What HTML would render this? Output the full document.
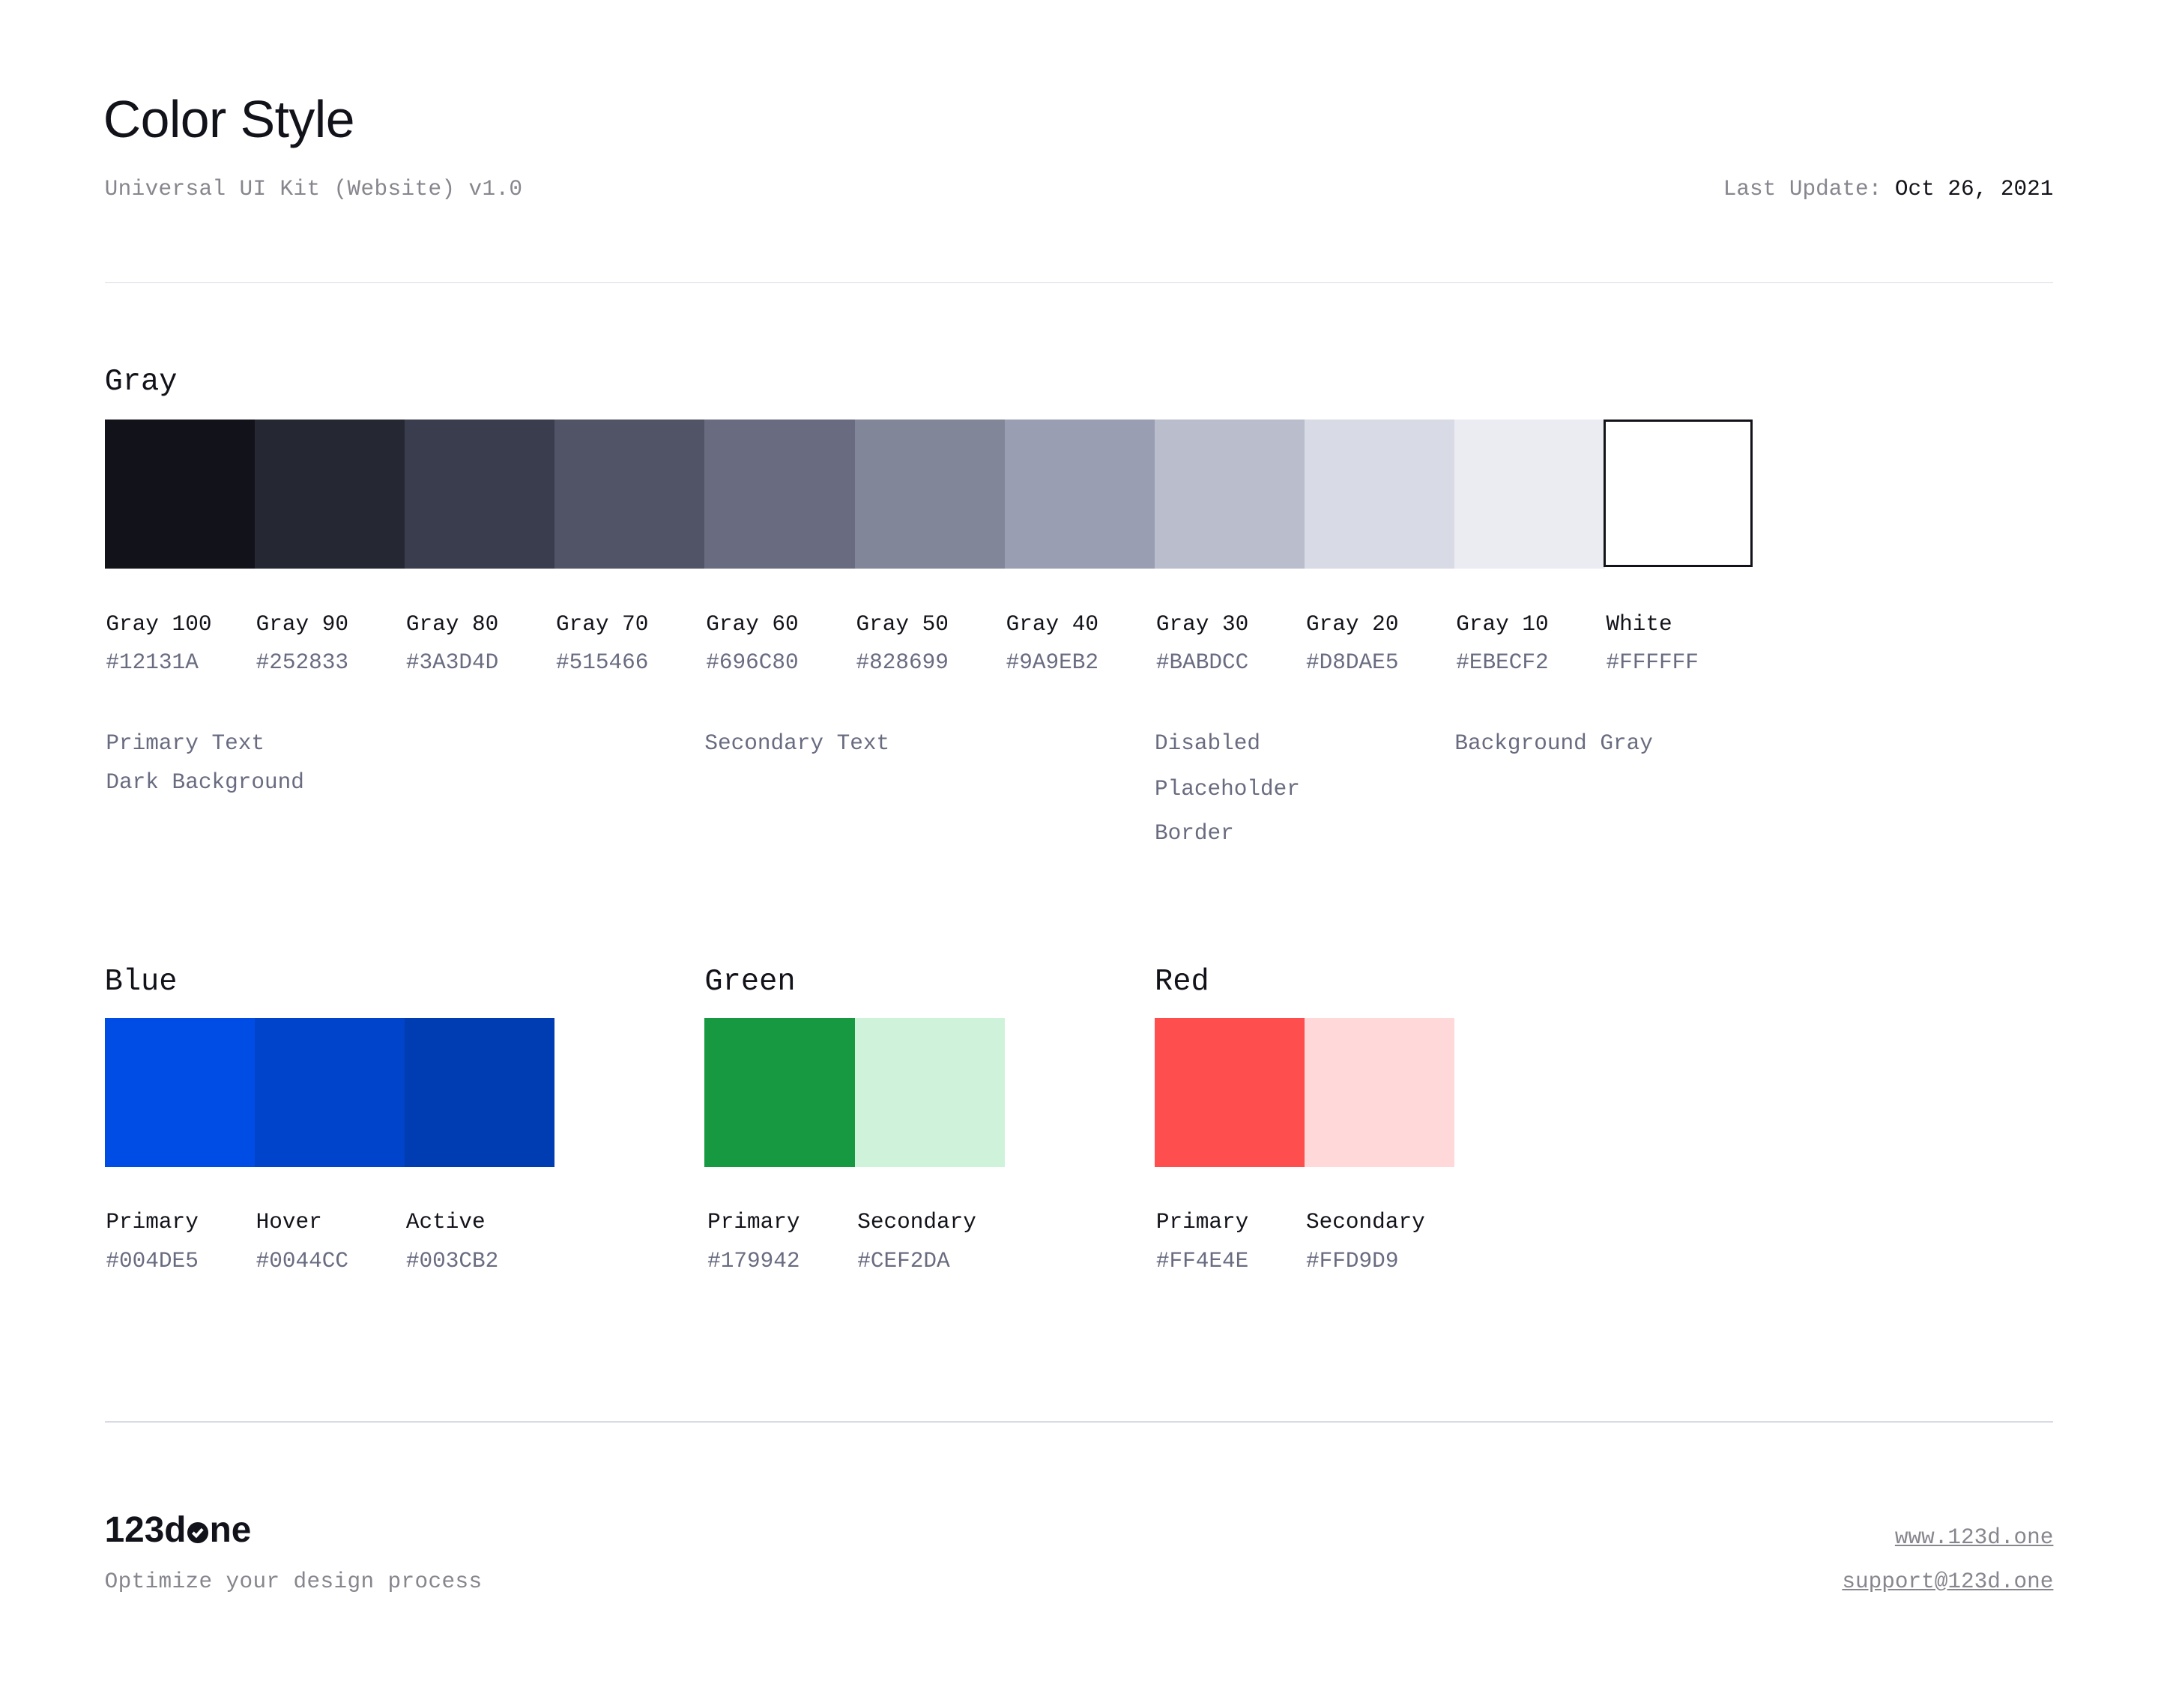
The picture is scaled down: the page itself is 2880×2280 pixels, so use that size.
<!DOCTYPE html>
<html><head><meta charset="utf-8"><style>
html,body{margin:0;padding:0;background:#fff;width:2880px;height:2280px;overflow:hidden}
#w{position:absolute;left:0;top:0;width:1568px;height:1241px;zoom:1.83673}
.a{position:absolute;white-space:nowrap}
.m{font-family:"Liberation Mono",monospace;font-size:16px;letter-spacing:0px;line-height:20px;margin-top:2px}
.s{font-family:"Liberation Sans",sans-serif}
.sw{position:absolute;width:109px;height:108px}
.n{color:#12131a}.h{color:#696c80}.g{color:#86868e}
h2{margin:0;margin-top:3px;position:absolute;font-family:"Liberation Mono",monospace;font-weight:normal;font-size:22px;color:#12131a}
</style></head><body><div id="w">
<div class="a s" style="left:75px;top:65px;font-size:38px;color:#12131a;letter-spacing:-0.3px">Color Style</div>
<div class="a m g" style="left:76px;top:126px;letter-spacing:0.2px">Universal UI Kit (Website) v1.0</div>
<div class="a m" style="right:76px;top:126px"><span class="g">Last Update: </span><span class="n">Oct 26, 2021</span></div>
<div class="a" style="left:76px;top:205px;width:1416px;height:1px;background:#d8dae5"></div>

<h2 style="left:76px;top:262px">Gray</h2>
<div class="sw" style="left:76px;top:305px;background:#12131a"></div>
<div class="sw" style="left:185px;top:305px;background:#252833"></div>
<div class="sw" style="left:294px;top:305px;background:#3a3d4d"></div>
<div class="sw" style="left:403px;top:305px;background:#515466"></div>
<div class="sw" style="left:512px;top:305px;background:#696c80"></div>
<div class="sw" style="left:621px;top:305px;background:#828699"></div>
<div class="sw" style="left:730px;top:305px;background:#9a9eb2"></div>
<div class="sw" style="left:839px;top:305px;background:#babdcc"></div>
<div class="sw" style="left:948px;top:305px;background:#d8dae5"></div>
<div class="sw" style="left:1057px;top:305px;background:#ebecf2"></div>
<div class="sw" style="left:1165px;top:305px;width:105px;height:104px;border:2px solid #12131a;background:#fff"></div>

<div class="a m n" style="left:77px;top:442px">Gray 100</div><div class="a m h" style="left:77px;top:470px">#12131A</div>
<div class="a m n" style="left:186px;top:442px">Gray 90</div><div class="a m h" style="left:186px;top:470px">#252833</div>
<div class="a m n" style="left:295px;top:442px">Gray 80</div><div class="a m h" style="left:295px;top:470px">#3A3D4D</div>
<div class="a m n" style="left:404px;top:442px">Gray 70</div><div class="a m h" style="left:404px;top:470px">#515466</div>
<div class="a m n" style="left:513px;top:442px">Gray 60</div><div class="a m h" style="left:513px;top:470px">#696C80</div>
<div class="a m n" style="left:622px;top:442px">Gray 50</div><div class="a m h" style="left:622px;top:470px">#828699</div>
<div class="a m n" style="left:731px;top:442px">Gray 40</div><div class="a m h" style="left:731px;top:470px">#9A9EB2</div>
<div class="a m n" style="left:840px;top:442px">Gray 30</div><div class="a m h" style="left:840px;top:470px">#BABDCC</div>
<div class="a m n" style="left:949px;top:442px">Gray 20</div><div class="a m h" style="left:949px;top:470px">#D8DAE5</div>
<div class="a m n" style="left:1058px;top:442px">Gray 10</div><div class="a m h" style="left:1058px;top:470px">#EBECF2</div>
<div class="a m n" style="left:1167px;top:442px">White</div><div class="a m h" style="left:1167px;top:470px">#FFFFFF</div>

<div class="a m h" style="left:77px;top:529px">Primary Text</div>
<div class="a m h" style="left:77px;top:557px">Dark Background</div>
<div class="a m h" style="left:512px;top:529px">Secondary Text</div>
<div class="a m h" style="left:839px;top:529px">Disabled</div>
<div class="a m h" style="left:839px;top:562px">Placeholder</div>
<div class="a m h" style="left:839px;top:594px">Border</div>
<div class="a m h" style="left:1057px;top:529px">Background Gray</div>

<h2 style="left:76px;top:698px">Blue</h2>
<div class="sw" style="left:76px;top:740px;background:#004de5"></div>
<div class="sw" style="left:185px;top:740px;background:#0044cc"></div>
<div class="sw" style="left:294px;top:740px;background:#003cb2"></div>
<div class="a m n" style="left:77px;top:877px">Primary</div><div class="a m h" style="left:77px;top:905px">#004DE5</div>
<div class="a m n" style="left:186px;top:877px">Hover</div><div class="a m h" style="left:186px;top:905px">#0044CC</div>
<div class="a m n" style="left:295px;top:877px">Active</div><div class="a m h" style="left:295px;top:905px">#003CB2</div>

<h2 style="left:512px;top:698px">Green</h2>
<div class="sw" style="left:512px;top:740px;background:#179942"></div>
<div class="sw" style="left:621px;top:740px;background:#cef2da"></div>
<div class="a m n" style="left:514px;top:877px">Primary</div><div class="a m h" style="left:514px;top:905px">#179942</div>
<div class="a m n" style="left:623px;top:877px">Secondary</div><div class="a m h" style="left:623px;top:905px">#CEF2DA</div>

<h2 style="left:839px;top:698px">Red</h2>
<div class="sw" style="left:839px;top:740px;background:#ff4e4e"></div>
<div class="sw" style="left:948px;top:740px;background:#ffd9d9"></div>
<div class="a m n" style="left:840px;top:877px">Primary</div><div class="a m h" style="left:840px;top:905px">#FF4E4E</div>
<div class="a m n" style="left:949px;top:877px">Secondary</div><div class="a m h" style="left:949px;top:905px">#FFD9D9</div>

<div class="a" style="left:76px;top:1033px;width:1416px;height:1px;background:#d8dae5"></div>

<div class="a s" style="left:76px;top:1097px;font-size:26px;font-weight:bold;color:#12131a;letter-spacing:0px">123d<span style="display:inline-block;width:15px;height:15px;border-radius:50%;background:#12131a;position:relative;vertical-align:-1px;margin:0 1px"><svg width="15" height="15" viewBox="0 0 15 15" style="position:absolute;left:0;top:0"><path d="M4 7.5 L6.5 10 L11 5" stroke="#fff" stroke-width="2.2" fill="none"/></svg></span>ne</div>
<div class="a m g" style="left:76px;top:1138px;letter-spacing:0.2px">Optimize your design process</div>
<div class="a m g" style="right:76px;top:1106px;text-decoration:underline">www.123d.one</div>
<div class="a m g" style="right:76px;top:1138px;text-decoration:underline">support@123d.one</div>
</div></body></html>
